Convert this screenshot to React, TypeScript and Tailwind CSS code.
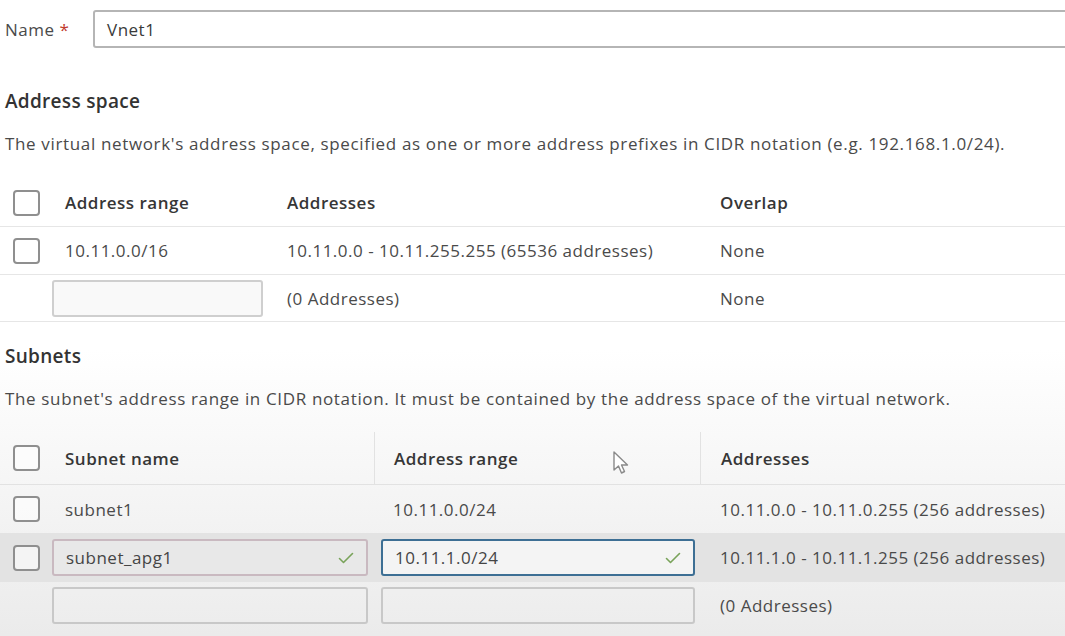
import React from 'react';

// --- Small pieces ---

const Checkbox = () => (
    <div className="w-[27px] h-[26px] rounded-[4px] border-2 border-[#8f8f8f] bg-white/60" />
);

const CheckMark = () => (
    <svg width="16" height="14" viewBox="0 0 16 14" fill="none">
        <path d="M1.5 7.5L5.5 11.5L14.5 2.5" stroke="#79a35a" strokeWidth="1.6" strokeLinecap="round" strokeLinejoin="round" />
    </svg>
);

const Cursor = () => (
    <svg width="22" height="27" viewBox="0 0 22 27" fill="none">
        <path d="M2 2V20L6.5 16L9.5 23L12.5 21.5L9.5 15H15.5L2 2Z" fill="white" stroke="#8a8a8a" strokeWidth="1.4" strokeLinejoin="round" />
    </svg>
);

const TextBox = ({ value, width, focused, valid, border }: { value?: string; width: string; focused?: boolean; valid?: boolean; border?: string }) => (
    <div
        className={`${width} h-[37px] rounded-[3px] flex items-center justify-between px-[12px] ${
            focused ? 'border-2 border-[#3d6f94] bg-[#f4f4f4]' : `border-2 ${border ?? 'border-[#c4c4c4]'} bg-[#efefef]/40`
        }`}
    >
        <span className="text-[#454545]">{value}</span>
        {valid && <CheckMark />}
    </div>
);

const App = () => {
    return (
        <div className="w-[1065px] h-[636px] overflow-hidden bg-gradient-to-b from-white from-55% to-[#ebebeb] text-[17px] tracking-[0.5px] text-[#4a4a4a] font-['Open_Sans',sans-serif] leading-none">
            {/* Name field */}
            <div className="flex items-center pt-[10px] pl-[5px]">
                <div className="w-[88px] text-[#4a4a4a]">
                    Name <span className="text-[#c0392b]">*</span>
                </div>
                <div className="flex-1 h-[38px] -mr-[10px] border-2 border-[#b5b5b5] rounded-[3px] bg-white flex items-center pl-[12px] text-[#3a3a3a]">
                    Vnet1
                </div>
            </div>

            {/* Address space */}
            <h2 className="mt-[44px] pl-[5px] text-[19px] tracking-[0.3px] font-semibold text-[#333]">Address space</h2>
            <p className="mt-[24px] pl-[5px] tracking-[0.65px]">
                The virtual network's address space, specified as one or more address prefixes in CIDR notation (e.g. 192.168.1.0/24).
            </p>

            <div className="mt-[27px] grid grid-cols-[52px_235px_433px_1fr]">
                {/* header */}
                <div className="h-[48px] flex items-center pl-[13px] border-b border-[#e6e6e6]"><Checkbox /></div>
                <div className="h-[48px] flex items-center pl-[13px] border-b border-[#e6e6e6] font-semibold text-[#363636]">Address range</div>
                <div className="h-[48px] flex items-center border-b border-[#e6e6e6] font-semibold text-[#363636]">Addresses</div>
                <div className="h-[48px] flex items-center border-b border-[#e6e6e6] font-semibold text-[#363636]">Overlap</div>

                {/* row 1 */}
                <div className="h-[48px] flex items-center pl-[13px] border-b border-[#e6e6e6]"><Checkbox /></div>
                <div className="h-[48px] flex items-center pl-[13px] border-b border-[#e6e6e6]">10.11.0.0/16</div>
                <div className="h-[48px] flex items-center border-b border-[#e6e6e6]">10.11.0.0 - 10.11.255.255 (65536 addresses)</div>
                <div className="h-[48px] flex items-center border-b border-[#e6e6e6]">None</div>

                {/* row 2 */}
                <div className="h-[47px] border-b border-[#e6e6e6]" />
                <div className="h-[47px] flex items-center border-b border-[#e6e6e6]">
                    <TextBox width="w-[211px]" border="border-[#cfcfcf]" />
                </div>
                <div className="h-[47px] flex items-center border-b border-[#e6e6e6]">(0 Addresses)</div>
                <div className="h-[47px] flex items-center border-b border-[#e6e6e6]">None</div>
            </div>

            {/* Subnets */}
            <h2 className="mt-[25px] pl-[5px] text-[19px] tracking-[0.3px] font-semibold text-[#333]">Subnets</h2>
            <p className="mt-[24px] pl-[5px] tracking-[0.65px]">
                The subnet's address range in CIDR notation. It must be contained by the address space of the virtual network.
            </p>

            <div className="mt-[25px] grid grid-cols-[52px_322px_326px_1fr]">
                {/* header */}
                <div className="h-[53px] flex items-center pl-[13px] border-b border-[#e2e2e2]"><Checkbox /></div>
                <div className="h-[53px] flex items-center pl-[13px] border-b border-[#e2e2e2] font-semibold text-[#363636]">Subnet name</div>
                <div className="relative h-[53px] flex items-center pl-[19px] border-b border-l border-[#e2e2e2] font-semibold text-[#363636]">
                    Address range
                    <div className="absolute left-[237px] top-[18px]"><Cursor /></div>
                </div>
                <div className="h-[53px] flex items-center pl-[20px] border-b border-l border-[#e2e2e2] font-semibold text-[#363636]">Addresses</div>

                {/* subnet1 */}
                <div className="h-[48px] flex items-center pl-[13px]"><Checkbox /></div>
                <div className="h-[48px] flex items-center pl-[13px]">subnet1</div>
                <div className="h-[48px] flex items-center pl-[19px]">10.11.0.0/24</div>
                <div className="h-[48px] flex items-center pl-[20px]">10.11.0.0 - 10.11.0.255 (256 addresses)</div>

                {/* subnet_apg1 (selected row) */}
                <div className="h-[49px] flex items-center pl-[13px] bg-[#e3e3e3]"><Checkbox /></div>
                <div className="h-[49px] flex items-center bg-[#e3e3e3]">
                    <TextBox width="w-[316px]" value="subnet_apg1" valid border="border-[#c9b9c0]" />
                </div>
                <div className="h-[49px] flex items-center pl-[7px] bg-[#e3e3e3]">
                    <TextBox width="w-[314px]" value="10.11.1.0/24" valid focused />
                </div>
                <div className="h-[49px] flex items-center pl-[20px] bg-[#e3e3e3]">10.11.1.0 - 10.11.1.255 (256 addresses)</div>

                {/* empty row */}
                <div className="h-[47px]" />
                <div className="h-[47px] flex items-center">
                    <TextBox width="w-[316px]" border="border-[#c8c8c8]" />
                </div>
                <div className="h-[47px] flex items-center pl-[7px]">
                    <TextBox width="w-[314px]" border="border-[#c8c8c8]" />
                </div>
                <div className="h-[47px] flex items-center pl-[20px]">(0 Addresses)</div>
            </div>
        </div>
    );
};

export default App;
